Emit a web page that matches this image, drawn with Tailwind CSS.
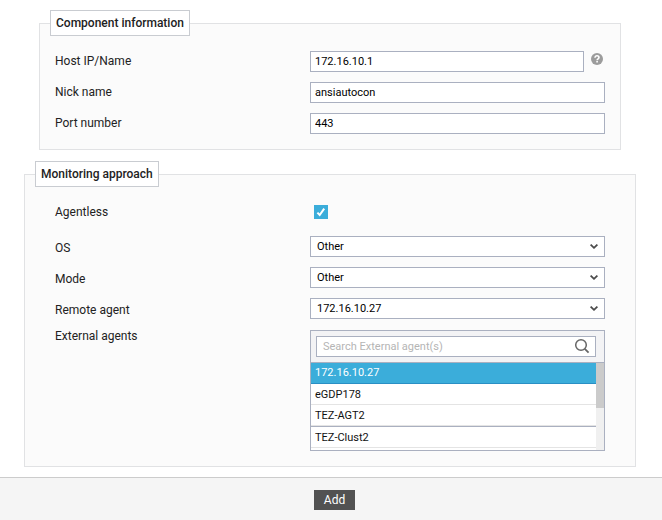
<!DOCTYPE html>
<html lang="en">
<head>
    <meta charset="UTF-8">
    <meta name="viewport" content="width=device-width, initial-scale=1.0">
    <title>Add Component</title>
    <!-- Tailwind CSS CDN -->
    <script src="https://cdn.jsdelivr.net/npm/@tailwindcss/browser@4"></script>
</head>
<body class="flex min-h-screen flex-col bg-white font-[Roboto,sans-serif] text-xs text-[#222]">
    <form class="flex grow flex-col">
        <main class="grow pt-[10px] pb-[10px]">
            <!-- Component information -->
            <fieldset class="mr-[41px] ml-[39px] border border-[#e1e2e4] bg-[#fbfbfb] px-[15px] pb-[15px]">
                <legend class="-ml-[5px] border border-[#c9ccd1] bg-white px-[5px] py-1 font-medium">Component information</legend>
                <div class="grid grid-cols-[255px_1fr] items-center gap-y-[10px] pt-[15px]">
                    <label for="hostIp" class="pb-[2px]">Host IP/Name</label>
                    <div class="flex gap-[7px] pr-[2px]">
                        <input id="hostIp" type="text" value="172.16.10.1" class="h-[21px] min-w-0 grow border border-[#aab0c0] bg-white px-1 text-[11px] text-black">
                        <button type="button" aria-label="Help" class="mt-[2px] size-3 shrink-0">
                            <svg viewBox="0 0 12 12" class="size-3">
                                <circle cx="6" cy="6" r="6" fill="#9c9c9c"/>
                                <path d="M4 4.7C4 3.4 4.9 2.8 6 2.8s2 .7 2 1.7c0 1.3-1.9 1.3-1.9 2.7" fill="none" stroke="#fff" stroke-width="1.6"/>
                                <rect x="5.3" y="8" width="1.6" height="1.5" fill="#fff"/>
                            </svg>
                        </button>
                    </div>

                    <label for="nickName" class="pb-[2px]">Nick name</label>
                    <input id="nickName" type="text" value="ansiautocon" class="h-[21px] w-full border border-[#aab0c0] bg-white px-1 text-[11px] text-black">

                    <label for="portNumber" class="pb-[2px]">Port number</label>
                    <input id="portNumber" type="text" value="443" class="h-[21px] w-full border border-[#aab0c0] bg-white px-1 text-[11px] text-black">
                </div>
            </fieldset>

            <!-- Monitoring approach -->
            <fieldset class="mt-[11px] mr-[26px] ml-[24px] border border-[#e1e2e4] bg-[#fbfbfb] px-[30px] pb-[15px]">
                <legend class="-ml-[20px] border border-[#c9ccd1] bg-white px-[5px] py-1 font-medium">Monitoring approach</legend>
                <div class="grid grid-cols-[255px_1fr] items-center gap-y-[10px] pt-[15px]">
                    <label for="agentless" class="mb-[3px] pb-[2px]">Agentless</label>
                    <div class="mb-[3px] grid h-[21px] items-start pt-[3px] pl-1">
                        <input id="agentless" type="checkbox" checked class="peer col-start-1 row-start-1 size-[14px] appearance-none border border-[#aab0c0] bg-white checked:border-[#3badda] checked:bg-[#3badda]">
                        <svg viewBox="0 0 14 14" class="pointer-events-none col-start-1 row-start-1 size-[14px] opacity-0 peer-checked:opacity-100">
                            <path d="M3.4 7.6l2.3 2.4 4.5-6.4" fill="none" stroke="#fff" stroke-width="2"/>
                        </svg>
                    </div>

                    <label for="os" class="pt-[2px]">OS</label>
                    <div class="grid items-center">
                        <select id="os" class="col-start-1 row-start-1 h-[21px] w-full appearance-none border border-[#aab0c0] bg-white px-[6px] pt-px text-[11px] text-black">
                            <option>Other</option>
                        </select>
                        <svg viewBox="0 0 8 5" class="pointer-events-none col-start-1 row-start-1 mr-[7px] h-[5px] w-2 justify-self-end">
                            <path d="M.6.6L4 3.8 7.4.6" fill="none" stroke="#4b4b4b" stroke-width="1.8"/>
                        </svg>
                    </div>

                    <label for="mode" class="pt-[2px]">Mode</label>
                    <div class="grid items-center">
                        <select id="mode" class="col-start-1 row-start-1 h-[21px] w-full appearance-none border border-[#aab0c0] bg-white px-[6px] pt-px text-[11px] text-black">
                            <option>Other</option>
                        </select>
                        <svg viewBox="0 0 8 5" class="pointer-events-none col-start-1 row-start-1 mr-[7px] h-[5px] w-2 justify-self-end">
                            <path d="M.6.6L4 3.8 7.4.6" fill="none" stroke="#4b4b4b" stroke-width="1.8"/>
                        </svg>
                    </div>

                    <label for="remoteAgent" class="pt-[2px]">Remote agent</label>
                    <div class="grid items-center">
                        <select id="remoteAgent" class="col-start-1 row-start-1 h-[21px] w-full appearance-none border border-[#aab0c0] bg-white px-[6px] pt-px text-[11px] text-black">
                            <option>172.16.10.27</option>
                        </select>
                        <svg viewBox="0 0 8 5" class="pointer-events-none col-start-1 row-start-1 mr-[7px] h-[5px] w-2 justify-self-end">
                            <path d="M.6.6L4 3.8 7.4.6" fill="none" stroke="#4b4b4b" stroke-width="1.8"/>
                        </svg>
                    </div>

                    <label for="agentSearch" class="mt-px self-start leading-3">External agents</label>
                    <div class="mt-px border border-[#aab0c0] bg-white">
                        <div class="grid items-center border-b border-[#aab0c0] bg-[#f3f3f5] py-[5px] pr-2 pl-[5px]">
                            <input id="agentSearch" type="text" placeholder="Search External agent(s)" class="col-start-1 row-start-1 h-[21px] w-full border border-[#aab0c0] bg-white pr-6 pl-[6px] text-[11px] text-black placeholder:text-[#b5b5b5]">
                            <svg viewBox="0 0 16 16" class="pointer-events-none col-start-1 row-start-1 mr-[6px] mb-px size-4 justify-self-end">
                                <circle cx="7" cy="7" r="5.3" fill="none" stroke="#666" stroke-width="1.5"/>
                                <path d="M10.8 10.8l3.8 3.8" stroke="#666" stroke-width="1.8"/>
                            </svg>
                        </div>
                        <div class="flex">
                            <ul role="listbox" aria-label="External agents" class="grow pb-[2px] text-[11px] leading-[18px] text-[#111]">
                                <li role="option" aria-selected="true" class="border-b border-[#2a8fc4] bg-[#3badda] px-1 py-px text-white">172.16.10.27</li>
                                <li role="option" aria-selected="false" class="border-b border-[#e4e4e4] px-1 pt-[2px]">eGDP178</li>
                                <li role="option" aria-selected="false" class="border-b border-[#e4e4e4] px-1 pt-[2px]">TEZ-AGT2</li>
                                <li role="option" aria-selected="false" class="border-t border-b border-t-[#aab0c0] border-b-[#e4e4e4] px-1 pt-[2px]">TEZ-Clust2</li>
                            </ul>
                            <!-- scrollbar -->
                            <div class="w-2 bg-[#f0f0f0]">
                                <div class="h-[45px] bg-[#cbcbcb]"></div>
                            </div>
                        </div>
                    </div>
                </div>
            </fieldset>
        </main>

        <footer class="flex justify-center border-t border-[#ccc] bg-[#f5f5f5] pt-3 pb-[10px] pl-[7px]">
            <button type="submit" class="h-5 bg-[#525252] px-[10px] text-white">Add</button>
        </footer>
    </form>
</body>
</html>
